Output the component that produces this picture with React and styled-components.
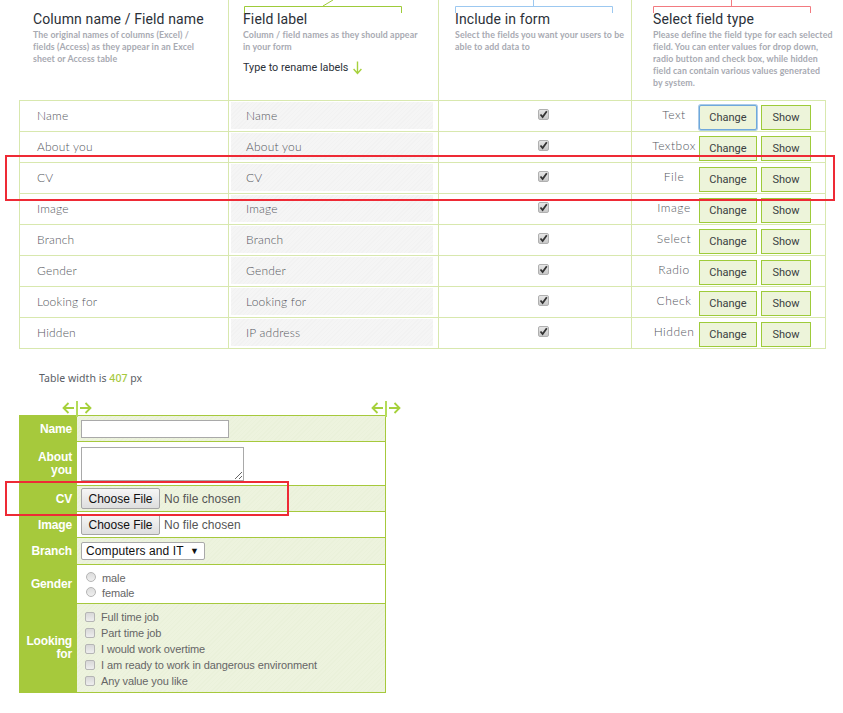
import React from "react";
import styled, { createGlobalStyle } from "styled-components";

const Global = createGlobalStyle`
  html, body { margin: 0; padding: 0; background: #fff; }
  body { font-family: Roboto, "Noto Sans", "Liberation Sans", sans-serif; }
`;
const Page = styled.div`
  position: relative;
  width: 843px;
  height: 713px;
  overflow: hidden;
`;
const Head = styled.div`
  display: grid;
  grid-template-columns: 209px 210px 193px 194px;
  margin-left: 19px;
  width: 806px;
  height: 100px;
`;
const HeadCell = styled.div`
  position: relative;
  box-sizing: border-box;
  padding: 10px 0 0 ${p => p.$pad}px;
  border-left: ${p => p.$first ? "0" : "1px solid #d8e8ae"};
`;
const HeadTitle = styled.div`
  font-size: 14px;
  line-height: 18px;
  color: #2b3038;
  letter-spacing: 0.12px;
`;
const HeadText = styled.div`
  margin-top: 1px;
  font-family: Lato, Roboto, sans-serif;
  font-size: 8.8px;
  line-height: 12px;
  font-weight: 700;
  letter-spacing: 0.1px;
  color: #a8aab2;
  width: ${p => p.$w}px;
`;
const Rename = styled.div`
  display: flex;
  align-items: center;
  gap: 5px;
  margin-top: 8px;
  font-size: 10.8px;
  line-height: 14px;
  color: #2b3038;
`;
const Bracket = styled.svg`
  position: absolute;
  left: ${p => p.$left}px;
  top: 0;
`;
const Grid = styled.div`
  margin-left: 19px;
  width: 807px;
  box-sizing: border-box;
  border: 1px solid #d8e8ae;
  border-bottom: 0;
`;
const Row = styled.div`
  display: grid;
  grid-template-columns: 208px 210px 193px 194px;
  height: 31px;
  box-sizing: border-box;
  border-bottom: 1px solid #d8e8ae;
`;
const NameCell = styled.div`
  padding: 0 0 1px 17px;
  display: flex;
  align-items: center;
  font-size: 12px;
  font-weight: 300;
  color: #55575e;
  font-family: Lato, "Noto Sans", sans-serif;
  letter-spacing: 0.2px;
`;
const LabelCell = styled.div`
  border-left: 1px solid #d8e8ae;
  padding: 1px 5px 2px 2px;
  display: flex;
`;
const LabelField = styled.div`
  flex: 1;
  display: flex;
  align-items: center;
  padding-left: 15px;
  font-size: 12px;
  font-weight: 300;
  color: #55575e;
  font-family: Lato, "Noto Sans", sans-serif;
  letter-spacing: 0.2px;
  background: repeating-linear-gradient(135deg, #f2f2f2 0 1px, #f5f5f5 1px 3px);
`;
const IncludeCell = styled.div`
  border-left: 1px solid #d8e8ae;
  display: flex;
  align-items: center;
  justify-content: center;
  padding: 0 0 3px 16px;
`;
const TypeCell = styled.div`
  border-left: 1px solid #d8e8ae;
  display: flex;
  align-items: center;
`;
const TypeName = styled.div`
  width: 84px;
  margin-right: -17px;
  padding-bottom: 3px;
  text-align: center;
  font-size: 12px;
  font-weight: 300;
  color: #55575e;
  font-family: Lato, "Noto Sans", sans-serif;
  letter-spacing: 0.5px;
  white-space: nowrap;
`;
const Btn = styled.button`
  box-sizing: border-box;
  flex: none;
  width: ${p => p.$w}px;
  height: 25px;
  margin: 3px 0 0 ${p => p.$ml}px;
  padding: 0;
  background: #edf4da;
  border: 1px solid ${p => p.$focus ? "#6fa8dc" : "#9ecb3a"};
  border-radius: ${p => p.$focus ? "2px" : "0"};
  box-shadow: ${p => p.$focus ? "0 0 0 1px #a9cbe8" : "none"};
  color: #3a3f3f;
  font-family: Roboto, sans-serif;
  font-size: 11px;
`;
const Check = styled.span`
  display: inline-flex;
  align-items: center;
  justify-content: center;
  box-sizing: border-box;
  width: 11px;
  height: 11px;
  border-radius: 2px;
  border: 1px solid #b0b0b0;
  background: linear-gradient(#e6e6e6, #c8c8c8);
`;
const Foot = styled.div`
  margin: 21px 0 0 39px;
  height: 16px;
  font-family: "Noto Sans", sans-serif;
  font-size: 10.5px;
  line-height: 16px;
  color: #5a5e66;
  letter-spacing: 0.05px;
  & b { font-weight: 500; color: #a6c93c; }
`;
const Arrows = styled.div`
  margin: 15px 0 0 19px;
  width: 382px;
  height: 14px;
  display: flex;
  justify-content: space-between;
  padding-left: 43px;
  box-sizing: border-box;
  position: relative;
  z-index: 1;
`;
const ArrowSvg = styled.svg`
  display: block;
  overflow: visible;
`;
const FormBox = styled.div`
  margin-left: 19px;
  width: 367px;
  box-sizing: border-box;
  border-top: 1px solid #a6c93c;
  border-right: 1px solid #a6c93c;
  border-bottom: 1px solid #a6c93c;
  font-family: "Liberation Sans", Arial, sans-serif;
`;
const FormRow = styled.div`
  display: grid;
  grid-template-columns: 58px 1fr;
  height: ${p => p.$h}px;
  box-sizing: border-box;
  border-bottom: ${p => p.$last ? "0" : "1px solid #a6c93c"};
`;
const FormLabel = styled.div`
  display: flex;
  align-items: center;
  justify-content: flex-end;
  text-align: right;
  padding-right: 5px;
  background: #a6c93c;
  color: #fff;
  font-weight: 700;
  font-size: 12px;
  letter-spacing: -0.15px;
  line-height: 13px;
  margin-bottom: ${p => p.$last ? "0" : "-1px"};
`;
const FormValue = styled.div`
  display: flex;
  flex-direction: ${p => p.$col ? "column" : "row"};
  align-items: ${p => p.$col ? "flex-start" : "center"};
  padding: ${p => p.$pt || 0}px 0 0 4px;
  background: ${p => p.$alt ? "repeating-linear-gradient(135deg, #eaf1da 0 1px, #edf3de 1px 3px)" : "#fff"};
`;
const TextInput = styled.input`
  box-sizing: border-box;
  width: 148px;
  height: 18px;
  margin: 0;
  padding: 0 2px;
  border: 1px solid #a9a9a9;
  background: #fff;
`;
const TextArea = styled.textarea`
  box-sizing: border-box;
  width: 163px;
  height: 34px;
  margin: 1px 0 0;
  padding: 2px;
  border: 1px solid #a9a9a9;
`;
const FileInput = styled.input`
  width: 190px;
  margin: 0;
  font-family: "Liberation Sans", Arial, sans-serif;
  font-size: 12px;
  color: #555;
  letter-spacing: 0.05px;
  &::file-selector-button {
    box-sizing: border-box;
    width: 79px;
    height: 21px;
    margin: 0 4px 0 0;
    padding: 0;
    font-family: "Liberation Sans", Arial, sans-serif;
    font-size: 12px;
    color: #111;
    border: 1px solid #a5a5a5;
    border-radius: 2px;
    background: linear-gradient(#f6f6f6, #dedede);
  }
`;
const SelectBox = styled.div`
  box-sizing: border-box;
  width: 124px;
  height: 18px;
  display: flex;
  align-items: center;
  justify-content: space-between;
  padding: 0 5px 0 4px;
  border: 1px solid #a9a9a9;
  border-radius: 2px;
  background: #fff;
  color: #111;
  font-size: 12px;
  letter-spacing: 0.1px;
  white-space: nowrap;
`;
const SelectArrow = styled.span`
  font-size: 9px;
  color: #111;
`;
const Option = styled.div`
  display: flex;
  align-items: center;
  height: ${p => p.$h}px;
  gap: ${p => p.$gap}px;
  padding-left: ${p => p.$pl}px;
  font-size: 11px;
  letter-spacing: -0.11px;
  color: #666;
  white-space: nowrap;
`;
const RadioGroup = styled.div`
  margin-top: 5px;
`;
const Radio = styled.span`
  box-sizing: border-box;
  width: 10px;
  height: 10px;
  border-radius: 50%;
  border: 1px solid #b5b5b5;
  background: linear-gradient(#dcdcdc, #efefef);
  margin-top: -1px;
`;
const Box = styled.span`
  box-sizing: border-box;
  width: 10px;
  height: 10px;
  border-radius: 2px;
  border: 1px solid #b5b5b5;
  background: linear-gradient(#d8d8d8, #eeeeee);
  margin-top: -1px;
`;
const Mark = styled.div`
  position: absolute;
  left: ${p => p.$l}px;
  top: ${p => p.$t}px;
  width: ${p => p.$w}px;
  height: ${p => p.$h}px;
  box-sizing: border-box;
  border: 2px solid #ee2a35;
  pointer-events: none;
`;

const rows = [
  ["Name", "Name", "Text"],
  ["About you", "About you", "Textbox"],
  ["CV", "CV", "File"],
  ["Image", "Image", "Image"],
  ["Branch", "Branch", "Select"],
  ["Gender", "Gender", "Radio"],
  ["Looking for", "Looking for", "Check"],
  ["Hidden", "IP address", "Hidden"],
];

const Tick = () => (
  <svg width="9" height="9" viewBox="0 0 9 9">
    <path d="M1.5 4.5 L3.6 7 L7.8 1.2" fill="none" stroke="#333" strokeWidth="1.8" />
  </svg>
);
const BracketArt = ({ left, color, w, stem, diag }) => (
  <Bracket $left={left} width={w + 2} height="15" viewBox={`0 0 ${w + 2} 15`}>
    <path d={`M0.5 13 V6.5 H${w + 0.5} V13`} fill="none" stroke={color} />
    {diag
      ? <path d={`M${stem} 6 L${stem + 10} 0`} stroke={color} fill="none" />
      : <path d={`M${stem + 0.5} 6 V0`} stroke={color} fill="none" />}
  </Bracket>
);
const DownArrow = () => (
  <svg width="9" height="14" viewBox="0 0 9 14">
    <path d="M4.5 0.5 V12.5 M0.6 8 L4.5 12.5 L8.4 8" fill="none" stroke="#a6d13c" strokeWidth="1.4" />
  </svg>
);
const SplitArrows = () => (
  <ArrowSvg width="30" height="16" viewBox="0 0 30 16">
    <path d="M12 7 H1.5 M6.5 2 L1.5 7 L6.5 12 M18 7 H28.5 M23.5 2 L28.5 7 L23.5 12" fill="none" stroke="#a6d13c" strokeWidth="1.8" />
    <path d="M15 0 V16" stroke="#b4dc5a" strokeWidth="2" />
  </ArrowSvg>
);

export default function App() {
  return (
    <Page>
      <Global />
      <Head>
        <HeadCell $first $pad={14}>
          <HeadTitle>Column name / Field name</HeadTitle>
          <HeadText $w={170}>The original names of columns (Excel) / fields (Access) as they appear in an Excel sheet or Access table</HeadText>
        </HeadCell>
        <HeadCell $pad={14}>
          <BracketArt left={15} color="#9ecb3a" w={157} stem={79} diag />
          <HeadTitle>Field label</HeadTitle>
          <HeadText $w={175}>Column / field names as they should appear in your form</HeadText>
          <Rename>Type to rename labels <DownArrow /></Rename>
        </HeadCell>
        <HeadCell $pad={16}>
          <BracketArt left={16} color="#9cc8f0" w={157} stem={78} />
          <HeadTitle>Include in form</HeadTitle>
          <HeadText $w={172}>Select the fields you want your users to be able to add data to</HeadText>
        </HeadCell>
        <HeadCell $pad={21}>
          <BracketArt left={21} color="#f27a80" w={157} stem={78} />
          <HeadTitle>Select field type</HeadTitle>
          <HeadText $w={181}>Please define the field type for each selected field. You can enter values for drop down, radio button and check box, while hidden<br />field can contain various values generated<br />by system.</HeadText>
        </HeadCell>
      </Head>
      <Grid>
        {rows.map((r, i) => (
          <Row key={r[0]}>
            <NameCell>{r[0]}</NameCell>
            <LabelCell><LabelField>{r[1]}</LabelField></LabelCell>
            <IncludeCell><Check><Tick /></Check></IncludeCell>
            <TypeCell>
              <TypeName>{r[2]}</TypeName>
              <Btn $w={58} $ml={0} $focus={i === 0}>Change</Btn>
              <Btn $w={50} $ml={4}>Show</Btn>
            </TypeCell>
          </Row>
        ))}
      </Grid>
      <Foot>Table width is <b>407</b> px</Foot>
      <Arrows><SplitArrows /><SplitArrows /></Arrows>
      <FormBox>
        <FormRow $h={26}>
          <FormLabel>Name</FormLabel>
          <FormValue $alt><TextInput /></FormValue>
        </FormRow>
        <FormRow $h={44}>
          <FormLabel>About you</FormLabel>
          <FormValue><TextArea /></FormValue>
        </FormRow>
        <FormRow $h={26}>
          <FormLabel>CV</FormLabel>
          <FormValue $alt><FileInput type="file" /></FormValue>
        </FormRow>
        <FormRow $h={26}>
          <FormLabel>Image</FormLabel>
          <FormValue><FileInput type="file" /></FormValue>
        </FormRow>
        <FormRow $h={27}>
          <FormLabel>Branch</FormLabel>
          <FormValue $alt><SelectBox>Computers and IT <SelectArrow>▼</SelectArrow></SelectBox></FormValue>
        </FormRow>
        <FormRow $h={39}>
          <FormLabel>Gender</FormLabel>
          <FormValue $col>
            <RadioGroup>
              <Option $h={15} $gap={6} $pl={5}><Radio />male</Option>
              <Option $h={15} $gap={6} $pl={5}><Radio />female</Option>
            </RadioGroup>
          </FormValue>
        </FormRow>
        <FormRow $h={88} $last>
          <FormLabel $last>Looking for</FormLabel>
          <FormValue $alt $col $pt={5}>
            {["Full time job", "Part time job", "I would work overtime", "I am ready to work in dangerous environment", "Any value you like"].map(t => (
              <Option key={t} $h={16} $gap={6} $pl={4}><Box />{t}</Option>
            ))}
          </FormValue>
        </FormRow>
      </FormBox>
      <Mark $l={5} $t={155} $w={830} $h={46} />
      <Mark $l={5} $t={481} $w={284} $h={35} />
    </Page>
  );
}
